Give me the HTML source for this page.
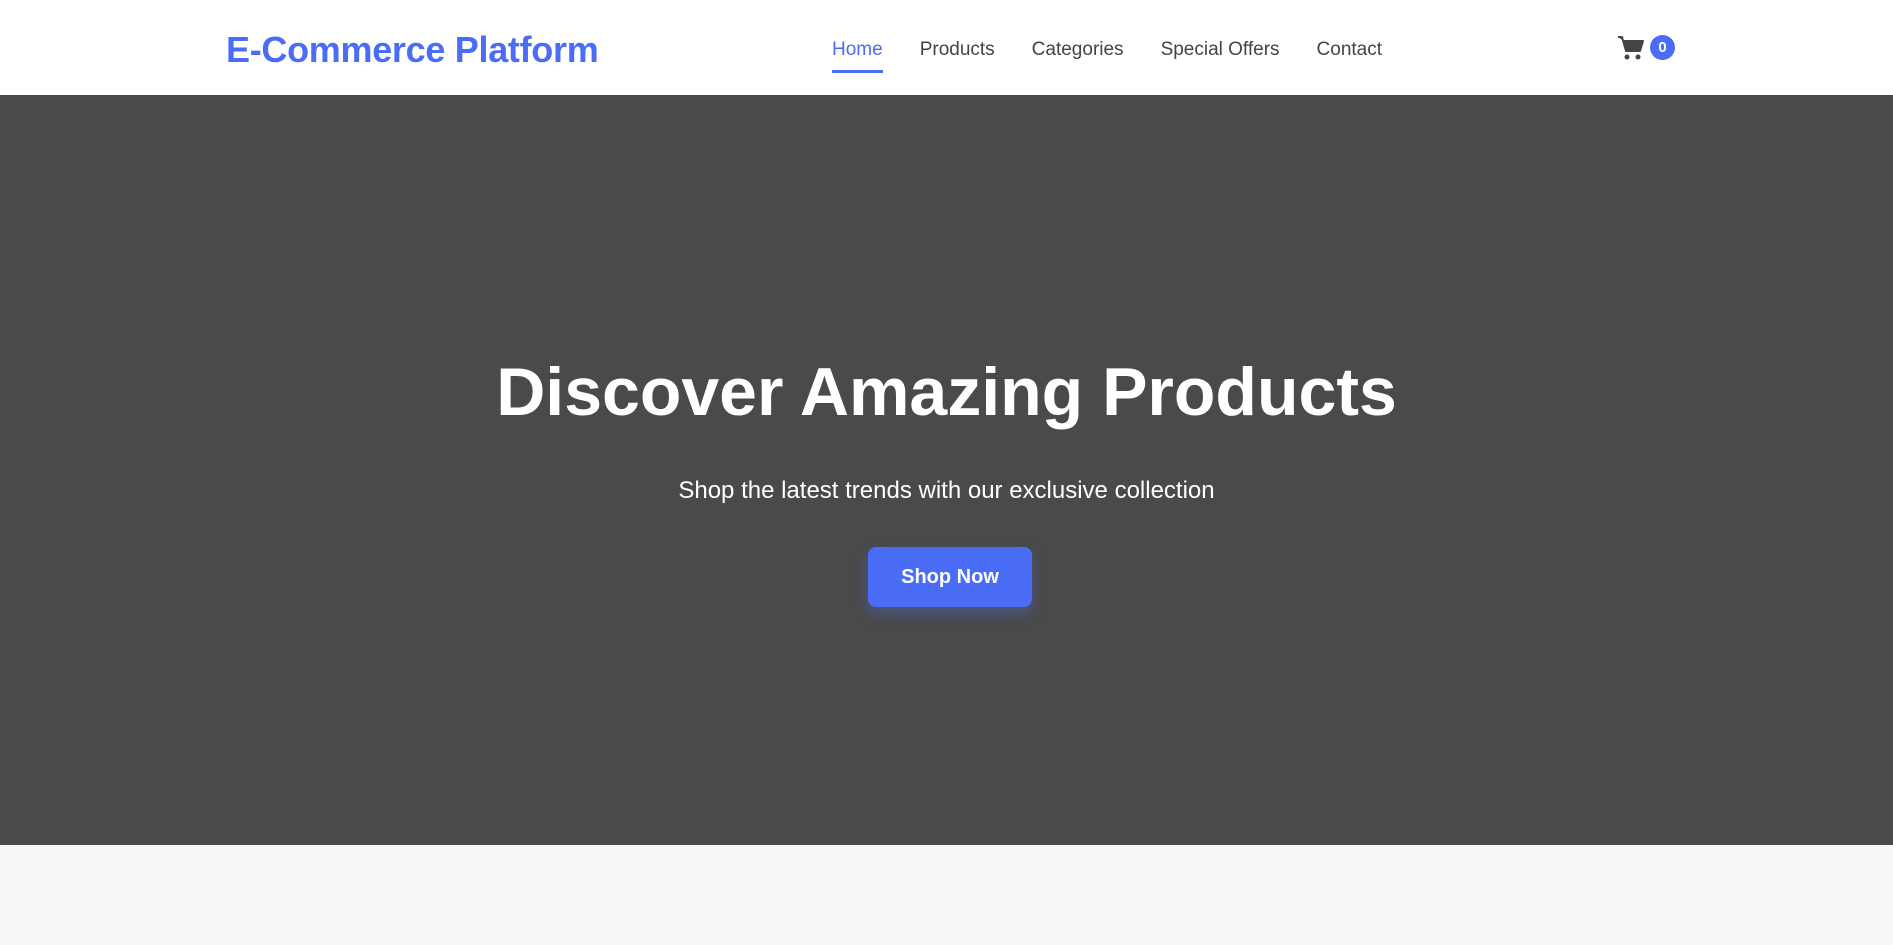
<!DOCTYPE html>
<html><head><style>
*{margin:0;padding:0;box-sizing:border-box}
body{width:1893px;height:945px;overflow:hidden;background:#f7f8fa;font-family:"Liberation Sans",sans-serif}
header{height:95px;background:#fff;position:relative}
.logo{position:absolute;left:226px;top:29px;font-size:36px;font-weight:bold;color:#4a6cf7;letter-spacing:-0.3px}
nav{position:absolute;left:832px;top:39px;font-size:19px;color:#444;display:flex;gap:37px}
nav span.a{color:#4a6cf7;position:relative}
nav span.a:after{content:"";position:absolute;left:0;right:0;bottom:-12px;height:3px;background:#4a6cf7}
.cart{position:absolute;left:1617px;top:35px}
.badge{position:absolute;left:1650px;top:35px;width:25px;height:25px;border-radius:13px;background:#4a6cf7;color:#fff;font-size:15px;font-weight:bold;text-align:center;line-height:25px}
.hero{height:750px;background:#4a4a4a;text-align:center;color:#fff;position:relative}
h1{position:absolute;left:0;right:0;top:263px;font-size:68px;font-weight:bold;line-height:1}
p{position:absolute;left:0;right:0;top:382px;font-size:24px}
.btn{position:absolute;left:868px;top:452px;width:164px;height:60px;background:#4a6cf7;border-radius:8px;font-size:20px;font-weight:bold;line-height:60px;box-shadow:0 6px 14px rgba(74,108,247,.35)}
</style></head><body>
<header>
<div class="logo">E-Commerce Platform</div>
<nav><span class="a">Home</span><span>Products</span><span>Categories</span><span>Special Offers</span><span>Contact</span></nav>
<svg class="cart" width="28" height="26" viewBox="0 0 28 26"><path d="M1 2h4l4 14h14l3-10H7" fill="#444" stroke="#444" stroke-width="2" stroke-linejoin="round"/><circle cx="10" cy="22" r="2.5" fill="#444"/><circle cx="21" cy="22" r="2.5" fill="#444"/></svg>
<div class="badge">0</div>
</header>
<div class="hero">
<h1>Discover Amazing Products</h1>
<p>Shop the latest trends with our exclusive collection</p>
<div class="btn">Shop Now</div>
</div>
</body></html>
